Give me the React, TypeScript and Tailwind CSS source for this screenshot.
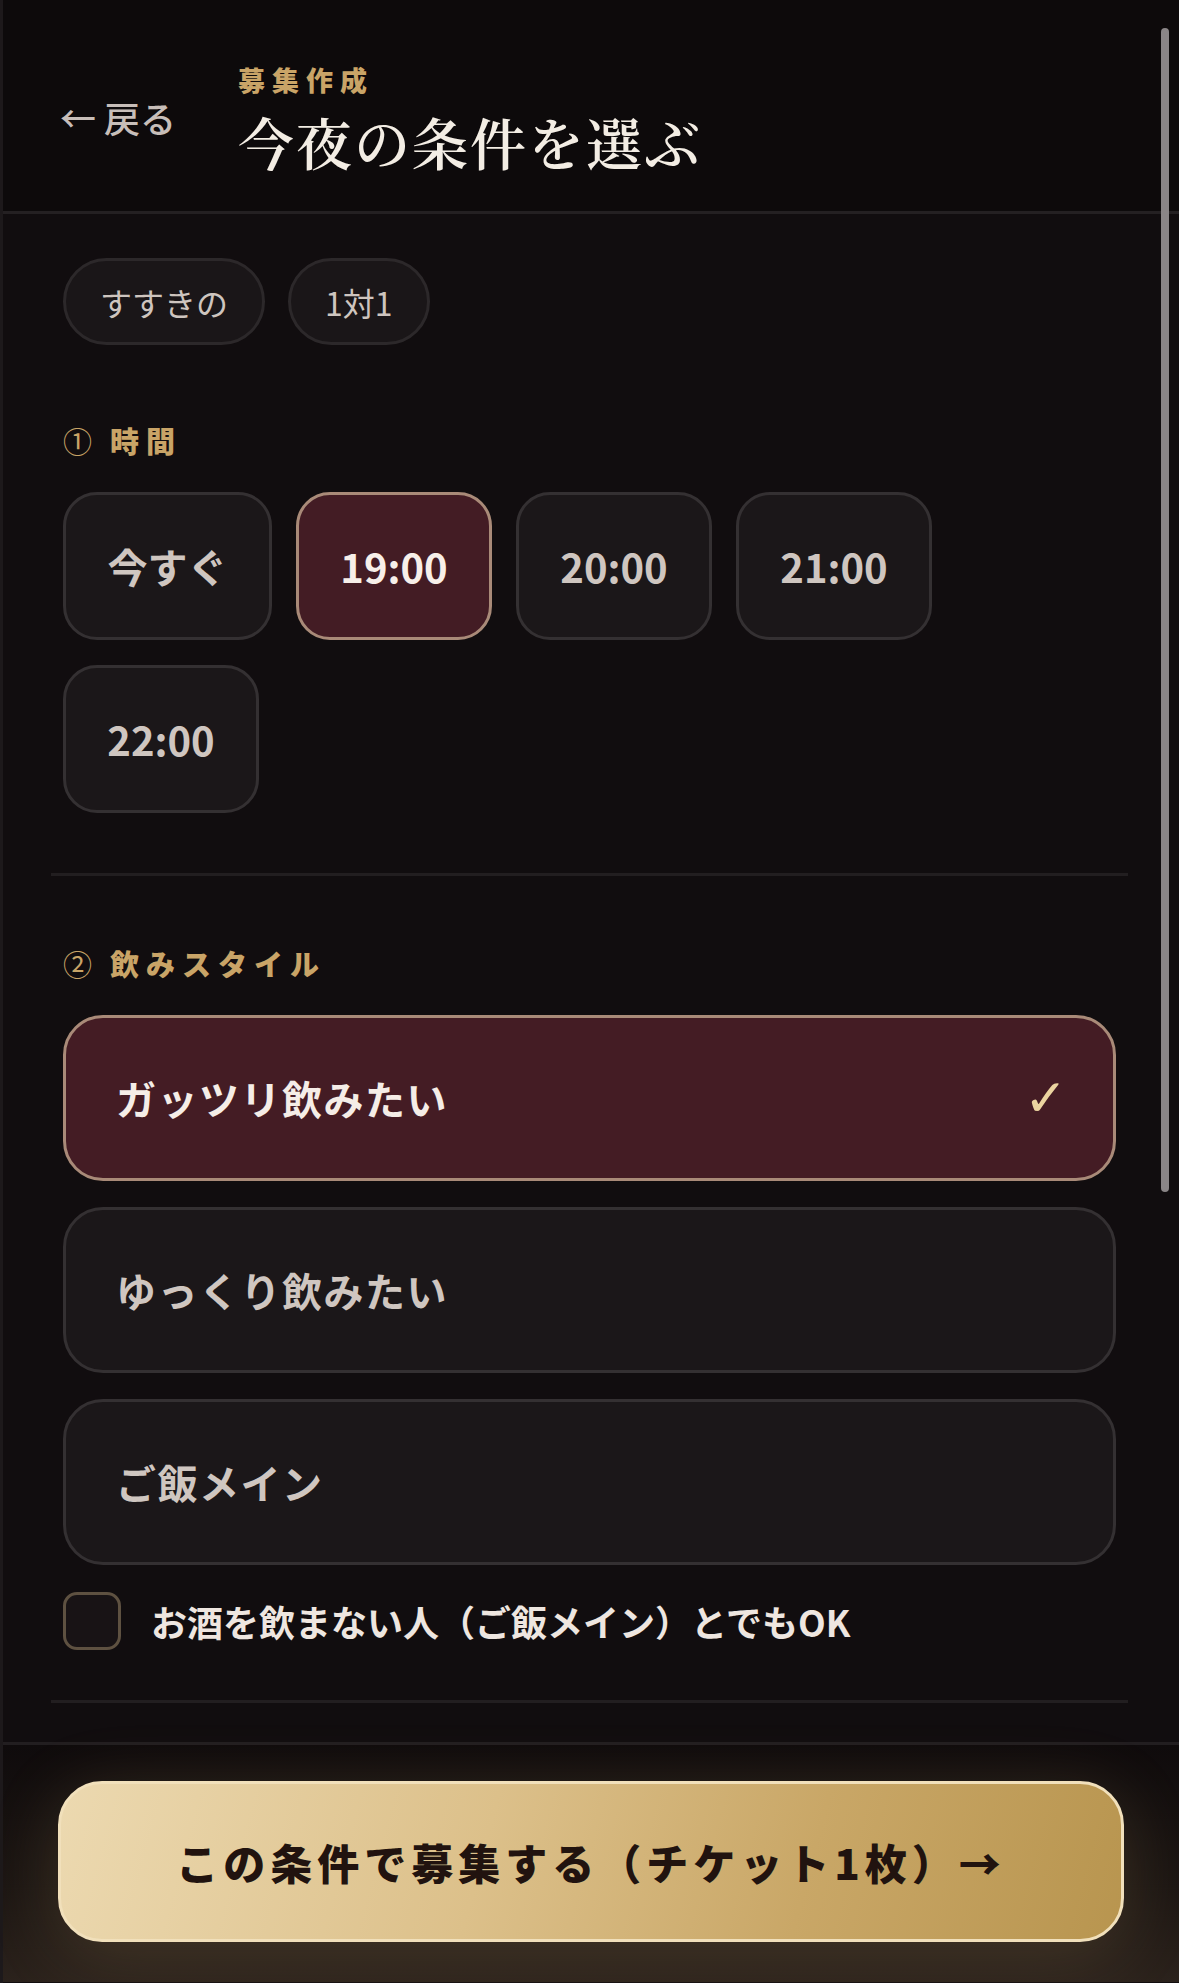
import { useState } from "react";

const TIMES = ["今すぐ", "19:00", "20:00", "21:00", "22:00"];
const STYLES = ["ガッツリ飲みたい", "ゆっくり飲みたい", "ご飯メイン"];

const jp = "font-['Noto_Sans_CJK_JP','Noto_Sans',sans-serif]";

const SectionLabel: React.FC<{ num: string; text: string }> = ({ num, text }) => (
  <div className="flex items-center gap-[18px] text-[#c9a467] font-bold text-[29px] leading-[30px]">
    <span className="font-normal">{num}</span>
    <span className="tracking-[7px] font-black">{text}</span>
  </div>
);

const App: React.FC = () => {
  const [time, setTime] = useState<string>("19:00");
  const [style, setStyle] = useState<string>("ガッツリ飲みたい");
  const [noDrinkOk, setNoDrinkOk] = useState<boolean>(false);

  return (
    <div
      className={`relative min-h-[1983px] w-full bg-[#110d0f] border-l-[3px] border-[#1d191b] ${jp}`}
    >
      {/* scrollbar */}
      <div className="absolute right-[10px] top-[28px] w-[8px] h-[1164px] rounded-full bg-[#8a8587]" />

      <header className="flex items-start h-[214px] pl-[57px] bg-[#0d0a0b] border-b-[3px] border-[#242022]">
        <button className="w-[178px] mt-[99px] text-left text-[36px] leading-[36px] font-medium text-[#c7beb9]">
          ←&nbsp;戻る
        </button>
        <div className="flex flex-col mt-[66px]">
          <span className="text-[27px] leading-[27px] font-black tracking-[7px] text-[#c9a467]">
            募集作成
          </span>
          <h1 className="mt-[20px] text-[56px] leading-[56px] tracking-[2px] font-semibold text-[#f3ede4] font-['Noto_Serif_CJK_JP','Noto_Serif_JP','Noto_Sans_CJK_JP',serif]">
            今夜の条件を選ぶ
          </h1>
        </div>
      </header>

      <main className="pl-[48px] pr-[51px]">
        <div className="flex gap-[23px] px-3 pt-[44px]">
          {["すすきの", "1対1"].map((c) => (
            <span
              key={c}
              className="flex items-center h-[87px] px-[34px] rounded-full border-[3px] border-[#2c282a] bg-[#1a1618] text-[32px] text-[#cec5bf]"
            >
              {c}
            </span>
          ))}
        </div>

        <section className="px-3 pt-[80px] pb-[60px] border-b-[3px] border-[#221e20]">
          <SectionLabel num="①" text="時間" />
          <div className="flex flex-wrap gap-x-[24px] gap-y-[25px] mt-[37px]">
            {TIMES.map((t, i) => {
              const active = t === time;
              return (
                <button
                  key={t}
                  onClick={() => setTime(t)}
                  className={`flex items-center justify-center h-[148px] ${
                    i === 0 ? "w-[209px]" : "w-[196px]"
                  } rounded-[34px] border-[3px] text-[40px] font-bold ${
                    active
                      ? "bg-[#431c24] border-[#a98a78] text-[#f7efe9]"
                      : "bg-[#1b1719] border-[#343032] text-[#cfc6c0]"
                  }`}
                >
                  {t}
                </button>
              );
            })}
          </div>
        </section>

        <section className="px-3 pt-[72px] pb-[50px] border-b-[3px] border-[#221e20]">
          <SectionLabel num="②" text="飲みスタイル" />
          <div className="flex flex-col gap-[26px] mt-[37px]">
            {STYLES.map((s) => {
              const active = s === style;
              return (
                <button
                  key={s}
                  onClick={() => setStyle(s)}
                  className={`flex items-center justify-between h-[166px] pl-[50px] pr-[44px] rounded-[40px] border-[3px] text-[40px] font-bold tracking-[1.5px] ${
                    active
                      ? "bg-[#441c24] border-[#a98a78] text-[#f5ede7]"
                      : "bg-[#1b1719] border-[#343032] text-[#cfc6c0]"
                  }`}
                >
                  <span>{s}</span>
                  {active && (
                    <span className="text-[52px] leading-[52px] font-light text-[#ecd4a0] font-['DejaVu_Sans',sans-serif]">
                      ✓
                    </span>
                  )}
                </button>
              );
            })}
          </div>
          <label className="flex items-center gap-[30px] mt-[27px] cursor-pointer">
            <span
              onClick={() => setNoDrinkOk(!noDrinkOk)}
              className="flex items-center justify-center w-[58px] h-[58px] rounded-[14px] border-[3px] border-[#5e5141] bg-[#181315] text-[#ecd4a0] text-[34px]"
            >
              {noDrinkOk ? "✓" : ""}
            </span>
            <span className="text-[36px] font-bold text-[#eee6e0]">
              お酒を飲まない人（ご飯メイン）とでもOK
            </span>
          </label>
        </section>
      </main>

      <footer className="mt-[39px] border-t-[3px] border-[#221e20] px-[55px] pt-[36px] pb-[40px] bg-[linear-gradient(180deg,#0f0b0c_0%,#1c1613_60%,#2b221c_100%)]">
        <button className="w-full h-[161px] rounded-[44px] border-[3px] border-[#f1e0bb] bg-[linear-gradient(105deg,#ecd9b0_0%,#dcc08a_40%,#c9a767_70%,#b8954f_100%)] shadow-[0_12px_70px_rgba(201,164,103,0.2)] text-[42px] font-black tracking-[5px] text-[#21130f]">
          この条件で募集する（チケット1枚）→
        </button>
      </footer>
    </div>
  );
};

export default App;
